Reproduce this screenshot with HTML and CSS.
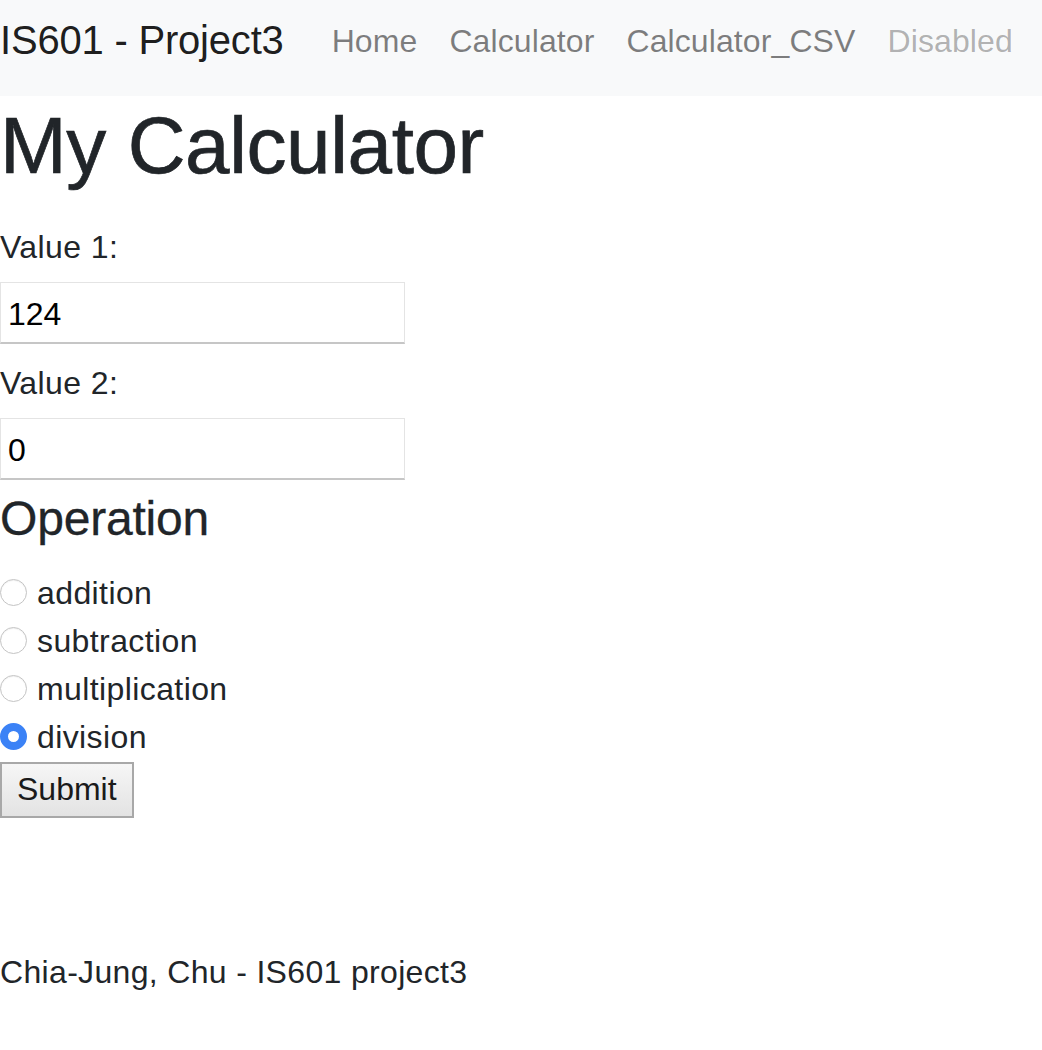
FILE: index.html
```html
<!DOCTYPE html>
<html lang="en">
<head>
<meta charset="utf-8">
<title>My Calculator</title>
<link rel="stylesheet" href="styles.css">
</head>
<body>
<nav class="navbar">
  <a class="brand" href="#">IS601 - Project3</a>
  <ul class="nav-links">
    <li><a class="nav-link" href="#">Home</a></li>
    <li><a class="nav-link" href="#">Calculator</a></li>
    <li><a class="nav-link" href="#">Calculator_CSV</a></li>
    <li><a class="nav-link disabled" href="#">Disabled</a></li>
  </ul>
</nav>
<main class="content">
  <h1 class="title">My Calculator</h1>
  <form class="calc-form">
    <label class="field-label first" for="v1">Value 1:</label>
    <input class="field-input" id="v1" type="text" value="124">
    <label class="field-label second" for="v2">Value 2:</label>
    <input class="field-input" id="v2" type="text" value="0">
    <h4 class="section-title">Operation</h4>
    <div class="radio-group">
      <label class="radio-row"><input class="radio" type="radio" name="op"><span>addition</span></label>
      <label class="radio-row"><input class="radio" type="radio" name="op"><span>subtraction</span></label>
      <label class="radio-row"><input class="radio" type="radio" name="op"><span>multiplication</span></label>
      <label class="radio-row"><input class="radio" type="radio" name="op" checked><span>division</span></label>
    </div>
    <button class="submit-btn" type="button">Submit</button>
  </form>
  <footer class="footer">Chia-Jung, Chu - IS601 project3</footer>
</main>
</body>
</html>
```
FILE: styles.css
```css
* {
  box-sizing: border-box;
}

html, body {
  margin: 0;
  padding: 0;
  background: #ffffff;
}

body {
  font-family: "Liberation Sans", Arial, sans-serif;
  font-size: 32px;
  line-height: 48px;
  color: #212529;
}

.navbar {
  display: flex;
  align-items: flex-start;
  height: 96px;
  padding-top: 10px;
  background: #f8f9fa;
}

.brand {
  font-size: 40px;
  line-height: 60px;
  color: rgba(0, 0, 0, 0.9);
  text-decoration: none;
  margin-right: 32px;
  white-space: nowrap;
  letter-spacing: -0.2px;
}

.nav-links {
  display: flex;
  list-style: none;
  margin: 7px 0 0;
  padding: 0;
}

.nav-link {
  display: block;
  padding: 0 16px;
  font-size: 32px;
  line-height: 48px;
  color: rgba(0, 0, 0, 0.5);
  text-decoration: none;
  white-space: nowrap;
  letter-spacing: 0.1px;
}

.nav-link.disabled {
  color: rgba(0, 0, 0, 0.3);
}

.title {
  margin: 2px 0 0;
  font-size: 80px;
  line-height: 96px;
  font-weight: 500;
  -webkit-text-stroke: 0.7px #212529;
  letter-spacing: -0.4px;
}

.calc-form {
  display: flex;
  flex-direction: column;
  align-items: flex-start;
  letter-spacing: 0.4px;
}

.field-label {
  display: block;
  line-height: 48px;
}

.field-label.first {
  margin-top: 29px;
}

.field-label.second {
  margin-top: 15px;
}

.field-input {
  display: block;
  margin-top: 11px;
  width: 405px;
  height: 62px;
  padding: 3px 7px 0;
  font-family: "Liberation Sans", Arial, sans-serif;
  font-size: 32px;
  color: #000000;
  background: #ffffff;
  border: 1px solid #e4e4e4;
  border-bottom: 2px solid #c6c6c6;
  border-radius: 0;
  outline: none;
}

.section-title {
  margin: 10px 0 0;
  font-size: 48px;
  line-height: 57.6px;
  font-weight: 500;
  letter-spacing: -0.2px;
  -webkit-text-stroke: 0.3px #212529;
}

.radio-group {
  display: flex;
  flex-direction: column;
  margin-top: 21px;
}

.radio-row {
  display: flex;
  align-items: center;
  height: 48px;
}

.radio {
  appearance: none;
  -webkit-appearance: none;
  width: 27px;
  height: 27px;
  margin: 0 10px 0 0;
  border-radius: 50%;
  border: 1px solid #c4c4c4;
  background: #ffffff;
  box-shadow: inset 0 1px 1px rgba(0, 0, 0, 0.06);
}

.radio:checked {
  border: 8px solid #3b82f6;
  background: #ffffff;
  box-shadow: none;
}

.submit-btn {
  margin-top: 1px;
  height: 56px;
  padding: 0 15px;
  font-family: "Liberation Sans", Arial, sans-serif;
  font-size: 32px;
  color: #1a1a1a;
  background: linear-gradient(#f6f6f6, #e3e3e3);
  border: 2px solid #a8a8a8;
  border-radius: 0;
  letter-spacing: 0;
}

.footer {
  margin-top: 130px;
  line-height: 48px;
  letter-spacing: 0.33px;
}
```
